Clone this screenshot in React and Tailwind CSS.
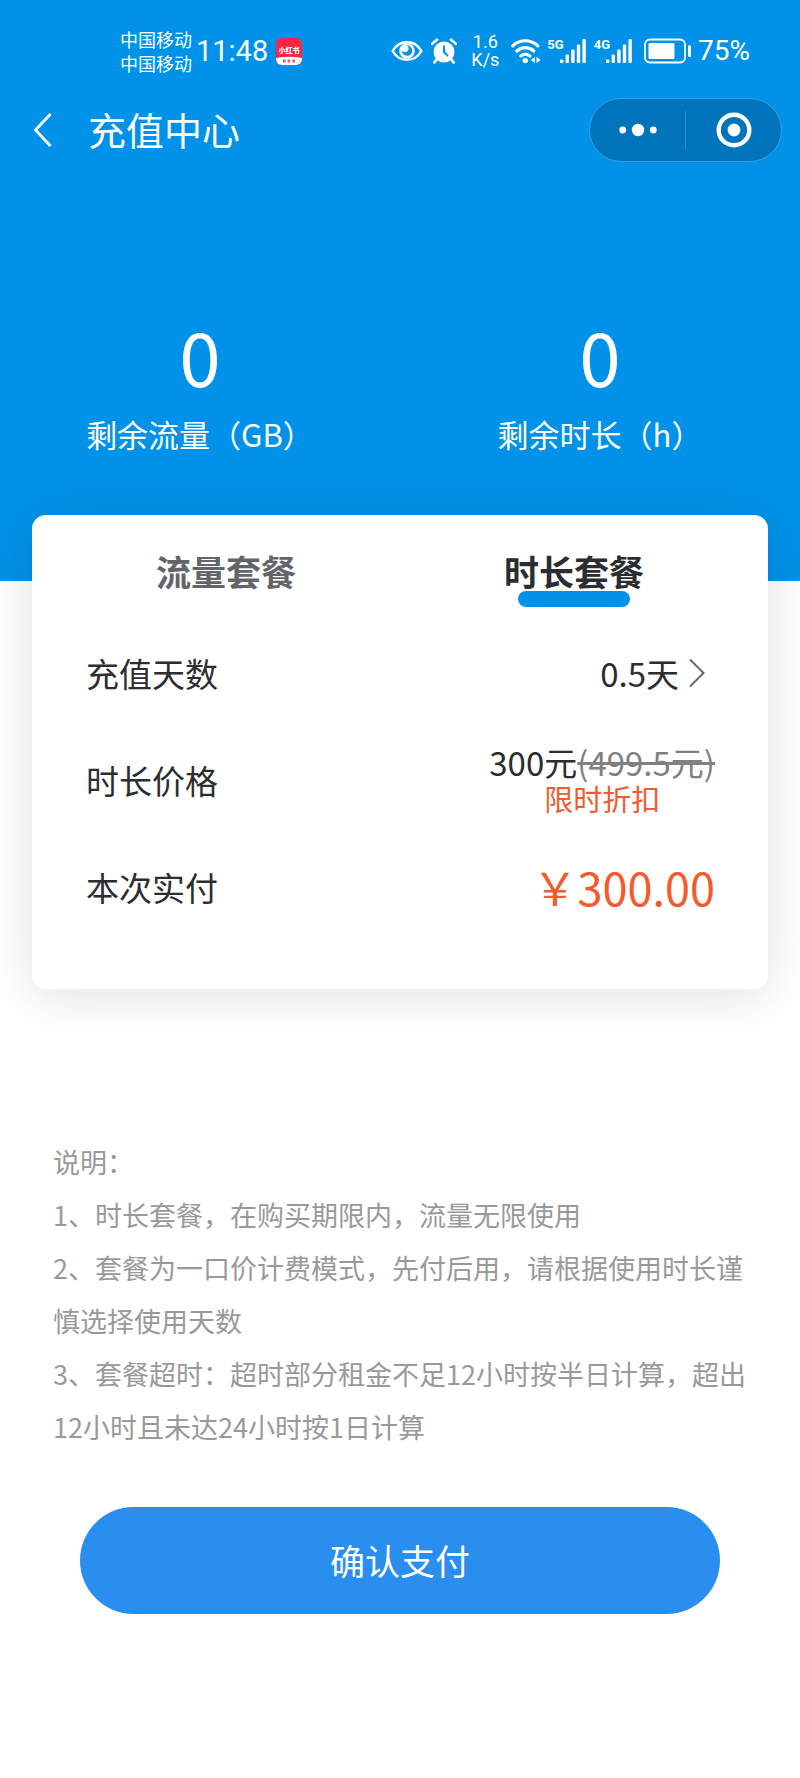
import { useState } from "react";

function AppBadge() {
  return (
    <svg viewBox="0 0 26 27" className="h-[27px] w-[26px]" role="img" aria-label="小红书">
      <defs>
        <clipPath id="badge">
          <rect width="26" height="27" rx="6" />
        </clipPath>
      </defs>
      <g clipPath="url(#badge)">
        <rect width="26" height="27" fill="#fb2442" />
        <path d="M0 20 Q13 17.5 26 20 V27 H0 Z" fill="#fff" />
        <path d="M7 21.5h2.6v3H7zM11.6 21.5h2.6v3h-2.6zM16.4 21.5H19v3h-2.6z" fill="#d8606c" />
      </g>
      <text x="13" y="14.5" textAnchor="middle" fontSize="7" fontWeight="900" fill="#fff">
        小红书
      </text>
    </svg>
  );
}

function EyeIcon() {
  return (
    <svg viewBox="0 0 32 22" className="h-[22px] w-8" aria-hidden="true">
      <path
        d="M1.6 11C5 5 10 2.200 16 2.200S27 5 30.400 11C27 17 22 19.800 16 19.800S5 17 1.600 11Z"
        fill="none"
        stroke="#fff"
        strokeWidth="2.400"
      />
      <circle cx="16" cy="11" r="7.800" fill="#fff" />
      <path d="M15.200 5.200c2.600 1 3.200 3.800 1.800 5.600-1.600 2-4.600 1.700-6-.3.100 3.300 2.500 5.300 5.200 5.200 3-.1 5.200-2.400 5-5.300-.2-3-2.800-5.400-6-5.200Z" fill="#0092e9" />
    </svg>
  );
}

function AlarmIcon() {
  return (
    <svg viewBox="0 0 26 26" className="size-[26px]" aria-hidden="true">
      <circle cx="13" cy="14" r="10.500" fill="#fff" />
      <path d="M1.200 5.800 6 1.700M24.800 5.800 20 1.700" stroke="#fff" strokeWidth="2.600" strokeLinecap="round" />
      <path d="m6 21-2.600 3.300M20 21l2.600 3.300" stroke="#fff" strokeWidth="2.800" strokeLinecap="round" />
      <path d="M13 8.200V14l3.600 3.600" fill="none" stroke="#0092e9" strokeWidth="2" strokeLinecap="round" />
    </svg>
  );
}

function WifiIcon() {
  return (
    <svg viewBox="0 0 30 26" className="h-[26px] w-[30px]" aria-hidden="true">
      <g fill="none" stroke="#fff" strokeWidth="3.200" strokeLinecap="round">
        <path d="M1.800 7.800a18 18 0 0 1 25 0" />
        <path d="M5.800 13a12.500 12.500 0 0 1 17 0" />
        <path d="M9.800 18a6.800 6.800 0 0 1 9 0" />
      </g>
      <circle cx="14.300" cy="22.600" r="2.700" fill="#fff" />
      <path d="m23.800 18.800-4 3.100 4 3.100zM25.500 18.800l4 3.100-4 3.100z" fill="#fff" />
    </svg>
  );
}

function Signal({ label }) {
  return (
    <div className="flex items-start">
      <span className="font-[Roboto] text-[13px] leading-[13px] font-bold">{label}</span>
      <svg viewBox="0 0 26 26" className="-ml-1 h-[26px] w-[26px]" aria-hidden="true">
        <g fill="#fff">
          <rect x="0" y="21.500" width="3.400" height="3.500" rx="1" />
          <rect x="5.600" y="16.500" width="3.400" height="8.500" rx="1" />
          <rect x="11.200" y="11.500" width="3.400" height="13.500" rx="1" />
          <rect x="16.800" y="6.500" width="3.400" height="18.500" rx="1" />
          <rect x="22.400" y="1" width="3.400" height="24" rx="1" />
        </g>
      </svg>
    </div>
  );
}

function BatteryIcon() {
  return (
    <svg viewBox="0 0 48 26" className="h-[26px] w-12" aria-hidden="true">
      <rect x="1" y="1.500" width="40" height="23" rx="5" fill="none" stroke="#fff" strokeWidth="1.800" />
      <rect x="4.500" y="5" width="26" height="16" rx="1.500" fill="#fff" />
      <rect x="44" y="7" width="3" height="12" rx="1.500" fill="#fff" />
    </svg>
  );
}

function StatusBar() {
  return (
    <div className="flex h-[98px] items-center justify-between pt-1 pr-[50px] pl-[120px]">
      <div className="flex items-center">
        <div className="text-[18px] leading-6">
          <p>中国移动</p>
          <p>中国移动</p>
        </div>
        <span className="ml-1 font-[Roboto] text-[29px] leading-8">11:48</span>
        <span className="ml-2">
          <AppBadge />
        </span>
      </div>
      <div className="flex items-center">
        <EyeIcon />
        <span className="ml-2">
          <AlarmIcon />
        </span>
        <div className="ml-[14px] text-center font-[Roboto] text-[18px] leading-[18px]">
          <p>1.6</p>
          <p>K/s</p>
        </div>
        <span className="ml-3">
          <WifiIcon />
        </span>
        <div className="ml-[6px] flex gap-2">
          <Signal label="5G" />
          <Signal label="4G" />
        </div>
        <span className="ml-3">
          <BatteryIcon />
        </span>
        <span className="ml-[6px] font-[Roboto] text-[28px] leading-8">75%</span>
      </div>
    </div>
  );
}

function NavBar() {
  return (
    <div className="flex h-16 items-center pr-[18px] pl-[30px]">
      <button type="button" aria-label="返回" className="flex h-12 w-6 items-center">
        <svg viewBox="0 0 24 36" className="h-9 w-6" aria-hidden="true">
          <path d="M20.500 2 5.500 18l15 16" fill="none" stroke="#fff" strokeWidth="2.800" />
        </svg>
      </button>
      <h1 className="ml-[34px] pb-[2px] text-[38px] leading-[48px]">充值中心</h1>
      <div className="ml-auto flex h-16 w-[193px] items-center rounded-full border border-[#3a9fdc] bg-[#0074bb]">
        <button type="button" aria-label="更多" className="flex h-full flex-1 items-center justify-center">
          <svg viewBox="0 0 38 14" className="h-[14px] w-[38px]" fill="#fff" aria-hidden="true">
            <circle cx="3.700" cy="7" r="3.400" />
            <circle cx="19" cy="7" r="6.200" />
            <circle cx="34.300" cy="7" r="3.400" />
          </svg>
        </button>
        <span className="h-[38px] w-px bg-[#2a8fce]" />
        <button type="button" aria-label="关闭" className="flex h-full flex-1 items-center justify-center">
          <svg viewBox="0 0 36 36" className="size-9" aria-hidden="true">
            <circle cx="18" cy="18" r="15.300" fill="none" stroke="#fff" strokeWidth="4.400" />
            <circle cx="18" cy="18" r="6.400" fill="#fff" />
          </svg>
        </button>
      </div>
    </div>
  );
}

function Stat({ value, label }) {
  return (
    <div className="text-center">
      <p className="text-[74px] leading-[74px]">{value}</p>
      <p className="mt-[22px] text-[31px] leading-10">{label}</p>
    </div>
  );
}

function Row({ label, children }) {
  return (
    <div className="flex h-[107px] items-center justify-between">
      <span>{label}</span>
      {children}
    </div>
  );
}

const TABS = ["流量套餐", "时长套餐"];

export default function App() {
  const [active, setActive] = useState(1);

  return (
    <main className="min-h-screen bg-white pb-16 font-['Noto_Sans_CJK_SC',sans-serif] text-[#2b2d2f]">
      <header className="bg-[#0092e9] pb-[127px] text-white">
        <StatusBar />
        <NavBar />
        <div className="grid grid-cols-2 pt-[156px]">
          <Stat value="0" label="剩余流量（GB）" />
          <Stat value="0" label="剩余时长（h）" />
        </div>
      </header>

      <section className="relative mx-8 -mt-[66px] rounded-[14px] bg-white pt-[38px] pb-[49px] shadow-[0_6px_50px_rgba(0,0,0,0.12)]">
        <div role="tablist" className="grid grid-cols-2 px-5">
          {TABS.map((tab, i) => (
            <button
              key={tab}
              type="button"
              role="tab"
              aria-selected={active === i}
              onClick={() => setActive(i)}
              className={
                active === i
                  ? "flex flex-col items-center gap-[2px] text-[35px] leading-9 font-bold"
                  : "flex flex-col items-center gap-[2px] text-[35px] leading-9 font-bold text-[#636568]"
              }
            >
              {tab}
              <span className={active === i ? "h-4 w-28 rounded-full bg-[#0092e9]" : "h-4 w-28"} />
            </button>
          ))}
        </div>

        <div className="mt-3 pr-[53px] pl-[54px] text-[33px] leading-9">
          <Row label="充值天数">
            <button type="button" className="flex items-center gap-[10px] pr-[10px]">
              0.5天
              <svg viewBox="0 0 16 30" className="h-[30px] w-4" aria-hidden="true">
                <path d="M1 1.500 14.500 15 1 28.500" fill="none" stroke="#66686b" strokeWidth="2" />
              </svg>
            </button>
          </Row>
          <Row label="时长价格">
            <div className="text-center">
              <p>
                300元<del className="text-[#808080]">(499.5元)</del>
              </p>
              <p className="text-[29px] text-[#f35b2f]">限时折扣</p>
            </div>
          </Row>
          <Row label="本次实付">
            <strong className="text-[45px] font-normal text-[#f35b2f]">￥300.00</strong>
          </Row>
        </div>
      </section>

      <section className="mt-[146px] px-[53px] text-[27px] leading-[53px] text-[#999999]">
        <p>说明：</p>
        <p>1、时长套餐，在购买期限内，流量无限使用</p>
        <p>2、套餐为一口价计费模式，先付后用，请根据使用时长谨慎选择使用天数</p>
        <p>3、套餐超时：超时部分租金不足12小时按半日计算，超出12小时且未达24小时按1日计算</p>
      </section>

      <div className="mt-[54px] px-20">
        <button type="button" className="h-[107px] w-full rounded-full bg-[#298eee] text-[35px] text-white">
          确认支付
        </button>
      </div>
    </main>
  );
}
